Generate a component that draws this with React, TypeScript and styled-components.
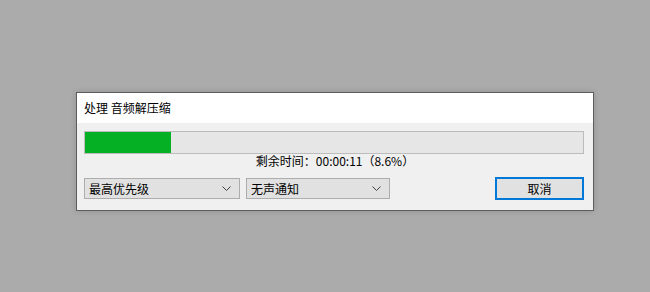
import React from "react";
import styled, { createGlobalStyle } from "styled-components";

const Global = createGlobalStyle`
  html, body { margin: 0; padding: 0; background: #ababab; }
  body { font-family: "Noto Sans CJK SC", "Noto Sans", sans-serif; font-size: 12px; color: #000; }
  #root { height: 292px; }
`;

const Page = styled.div`
  width: 650px;
  height: 292px;
  padding: 92px 0 0 76px;
  box-sizing: border-box;
`;

const Window = styled.div`
  width: 518px;
  height: 119px;
  box-sizing: border-box;
  border: 1px solid #5c5c5c;
  background: #f0f0f0;
  box-shadow: 0 0 6px rgba(0, 0, 0, 0.15);
  display: flex;
  flex-direction: column;
`;

const TitleBar = styled.div`
  height: 30px;
  background: #fff;
  display: flex;
  align-items: center;
  padding-left: 7px;
  font-size: 12px;
  line-height: 1;
`;

const Body = styled.div`
  flex: 1;
  padding: 8px 9px 0 7px;
  display: flex;
  flex-direction: column;
`;

const Track = styled.div`
  height: 23px;
  box-sizing: border-box;
  border: 1px solid #bcbcbc;
  background: #e6e6e6;
  display: flex;
`;

const Fill = styled.div`
  background: #06b025;
  height: 100%;
`;

const Status = styled.div`
  text-align: center;
  height: 13px;
  line-height: 13px;
  font-size: 12px;
  padding-left: 2px;
`;

const Controls = styled.div`
  margin-top: 10px;
  display: flex;
  align-items: center;
`;

const Select = styled.div<{ $w: number }>`
  width: ${(p) => p.$w}px;
  height: 21px;
  box-sizing: border-box;
  border: 1px solid #adadad;
  background: #e1e1e1;
  display: flex;
  align-items: center;
  justify-content: space-between;
  padding: 0 8px 0 4px;
  margin-right: 6px;
  font-size: 12px;
`;

const Spacer = styled.div`
  flex: 1;
`;

const Button = styled.div`
  width: 89px;
  height: 23px;
  box-sizing: border-box;
  border: 2px solid #0078d7;
  background: #e1e1e1;
  display: flex;
  align-items: center;
  justify-content: center;
  font-size: 12px;
`;

const Chevron = () => (
  <svg width="9" height="5" viewBox="0 0 9 5">
    <path d="M0.5 0.5 L4.5 4.5 L8.5 0.5" fill="none" stroke="#404040" strokeWidth="1" />
  </svg>
);

export default function App() {
  const fill = 86;
  return (
    <>
      <Global />
      <Page>
        <Window>
          <TitleBar>处理 音频解压缩</TitleBar>
          <Body>
            <Track>
              <Fill style={{ width: fill }} />
            </Track>
            <Status>剩余时间：00:00:11（8.6%）</Status>
            <Controls>
              <Select $w={156}>
                最高优先级
                <Chevron />
              </Select>
              <Select $w={144}>
                无声通知
                <Chevron />
              </Select>
              <Spacer />
              <Button>取消</Button>
            </Controls>
          </Body>
        </Window>
      </Page>
    </>
  );
}
